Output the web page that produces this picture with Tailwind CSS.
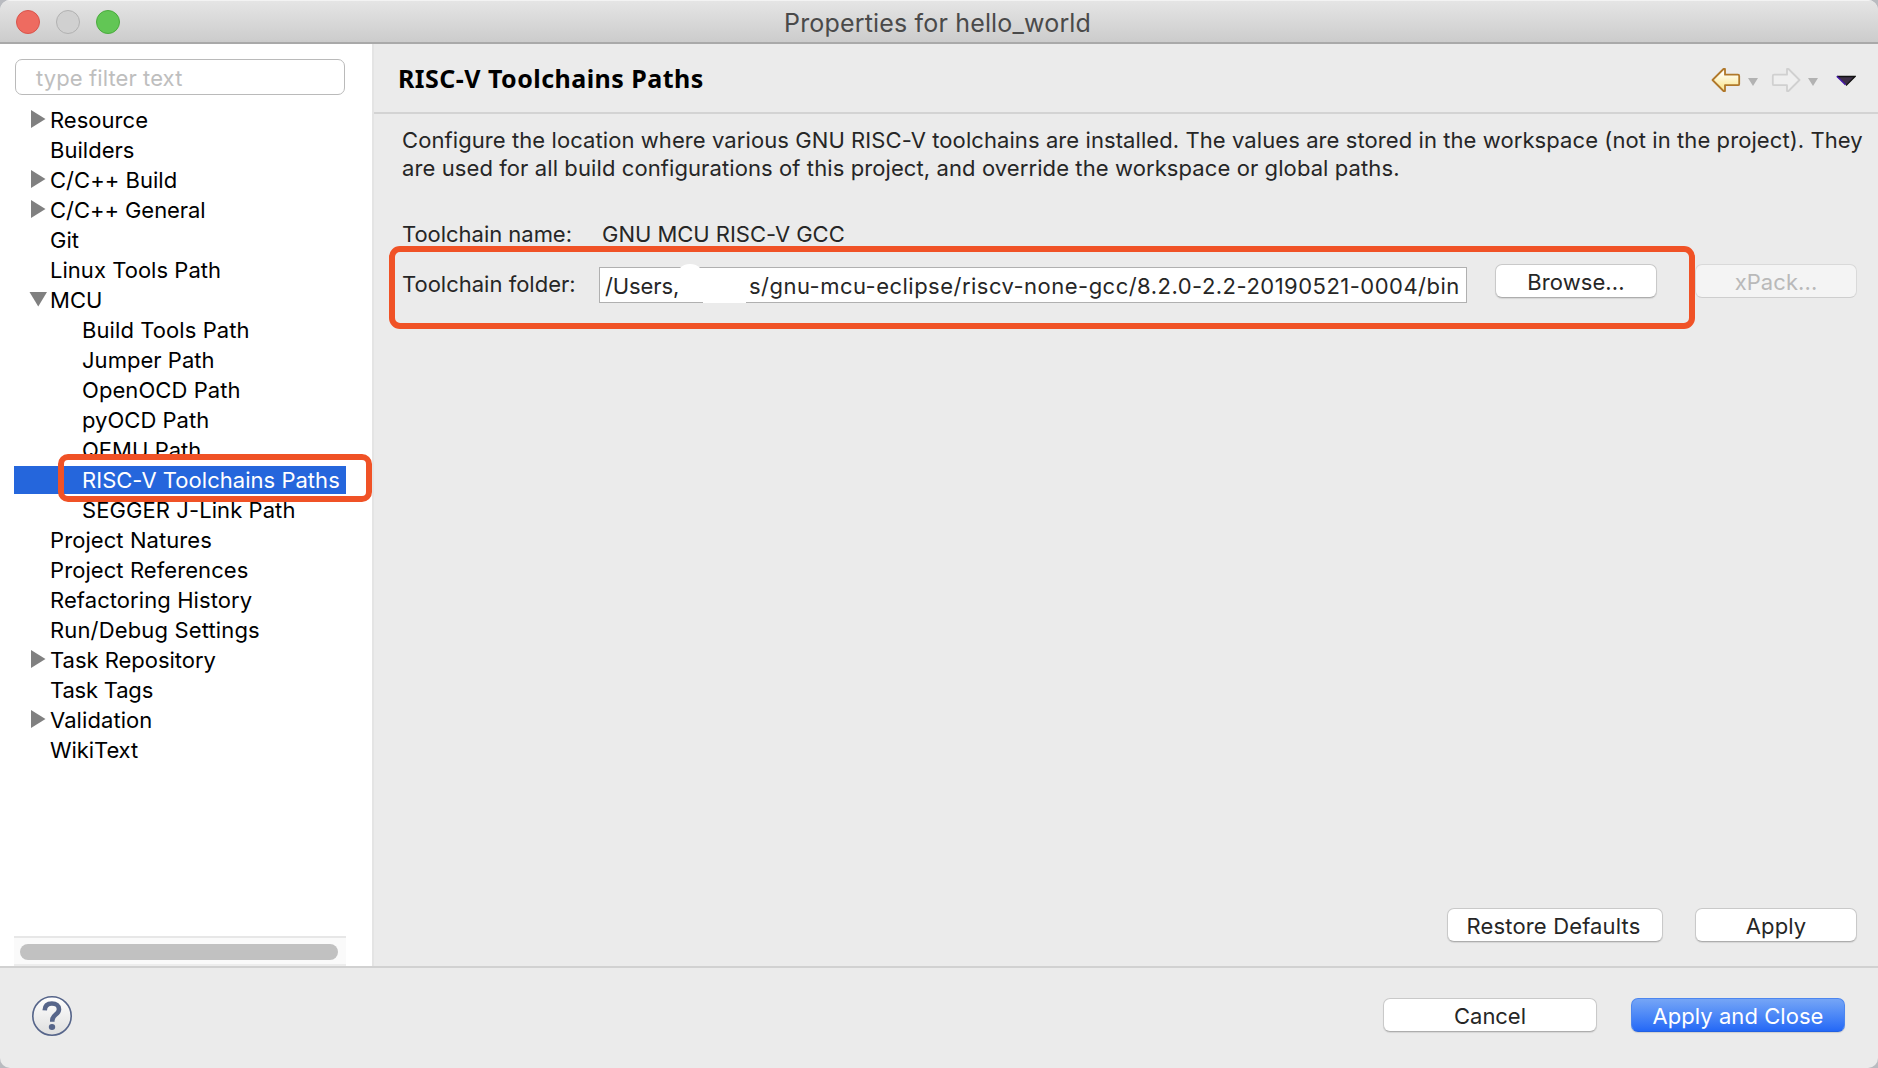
<!DOCTYPE html>
<html lang="en">
<head>
<meta charset="utf-8">
<title>Properties for hello_world</title>
<script src="https://cdn.jsdelivr.net/npm/@tailwindcss/browser@4"></script>
</head>
<body class="bg-[#b9bbc0]">
<div class="relative flex h-[1068px] w-[1878px] flex-col overflow-hidden rounded-[10px] bg-[#ebebeb] font-['Inter',sans-serif] text-[22px] leading-[30px] tracking-[0.08px] text-[#262626]">

  <!-- Title bar -->
  <header class="flex h-11 shrink-0 items-center border-t border-b-2 border-t-[#f3f3f3] border-b-[#a9a9a9] bg-linear-to-b from-[#e5e5e5] to-[#cccccc] pl-4">
    <div class="flex w-[300px] gap-4">
      <span class="size-6 rounded-full border border-[#d9544b] bg-[#ee6b60]"></span>
      <span class="size-6 rounded-full border border-[#b1b1b1] bg-[#d0d0d0]"></span>
      <span class="size-6 rounded-full border border-[#4aab3d] bg-[#62c655]"></span>
    </div>
    <h1 class="pt-[3px] pl-[468px] text-[25px] tracking-[0.17px] text-[#4a4a4a]">Properties for hello_world</h1>
  </header>

  <div class="flex min-h-0 flex-1">
    <!-- Navigation tree -->
    <aside class="flex w-[372px] shrink-0 flex-col bg-white pt-[15px] text-black">
      <div class="mr-[27px] ml-[15px] flex h-9 items-center rounded-[7px] border border-[#bababa] pt-0.5 pl-5 tracking-[0.1px] text-[#bebebe]">type filter text</div>
      <ul class="mt-2.5 mr-[26px] ml-3.5 tracking-[0.03px] whitespace-nowrap">
        <li class="flex h-[30px]"><svg class="h-[30px] w-9" viewBox="0 0 36 30"><path d="M17 5v18l14.500-9z" fill="#808080"/></svg>Resource</li>
        <li class="h-[30px] pl-9">Builders</li>
        <li class="flex h-[30px]"><svg class="h-[30px] w-9" viewBox="0 0 36 30"><path d="M17 5v18l14.500-9z" fill="#808080"/></svg>C/C++ Build</li>
        <li class="flex h-[30px] tracking-[-0.06px]"><svg class="h-[30px] w-9" viewBox="0 0 36 30"><path d="M17 5v18l14.500-9z" fill="#808080"/></svg>C/C++ General</li>
        <li class="h-[30px] pl-9">Git</li>
        <li class="h-[30px] pl-9">Linux Tools Path</li>
        <li class="flex h-[30px]"><svg class="h-[30px] w-9" viewBox="0 0 36 30"><path d="M15.500 7h17.500l-8.750 14.500z" fill="#808080"/></svg>MCU</li>
        <li class="h-[30px] pl-[68px] tracking-[0.08px]">Build Tools Path</li>
        <li class="h-[30px] pl-[68px]">Jumper Path</li>
        <li class="h-[30px] pl-[68px] tracking-[0.08px]">OpenOCD Path</li>
        <li class="h-[30px] pl-[68px]">pyOCD Path</li>
        <li class="h-[30px] pl-[68px]">QEMU Path</li>
        <li class="my-px h-7 bg-[#2566dc] pl-[68px] leading-7 text-white">RISC-V Toolchains Paths</li>
        <li class="h-[30px] pl-[68px] tracking-[0.08px]">SEGGER J-Link Path</li>
        <li class="h-[30px] pl-9 tracking-[0.08px]">Project Natures</li>
        <li class="h-[30px] pl-9 tracking-[0.08px]">Project References</li>
        <li class="h-[30px] pl-9 tracking-[0.08px]">Refactoring History</li>
        <li class="h-[30px] pl-9 tracking-[0.15px]">Run/Debug Settings</li>
        <li class="flex h-[30px] tracking-[-0.02px]"><svg class="h-[30px] w-9" viewBox="0 0 36 30"><path d="M17 5v18l14.500-9z" fill="#808080"/></svg>Task Repository</li>
        <li class="h-[30px] pl-9 tracking-[-0.2px]">Task Tags</li>
        <li class="flex h-[30px] tracking-[0.08px]"><svg class="h-[30px] w-9" viewBox="0 0 36 30"><path d="M17 5v18l14.500-9z" fill="#808080"/></svg>Validation</li>
        <li class="h-[30px] pl-9 tracking-[-0.1px]">WikiText</li>
      </ul>
      <div class="mt-auto mr-[26px] ml-3.5 h-[30px] border-y-2 border-t-[#e7e7e7] border-b-[#ededed] bg-[#fafafa] pt-1.5 pr-2 pl-1.5">
        <div class="h-4 rounded-full bg-[#c1c1c1]"></div>
      </div>
    </aside>

    <!-- Property page -->
    <main class="flex min-w-0 flex-1 flex-col border-l-2 border-[#e4e4e4]">
      <div class="flex h-[70px] shrink-0 items-center border-b-2 border-[#d3d3d3] pl-6">
        <h2 class="font-['Noto_Sans',sans-serif] text-[25px] font-bold tracking-[0.46px] text-black">RISC-V Toolchains Paths</h2>
        <div class="mt-1 mr-[22px] ml-auto flex items-center">
          <svg class="h-[26px] w-[30px]" viewBox="0 0 30 26" fill="none"><defs><linearGradient id="gold" x1="0" y1="0" x2="0" y2="1"><stop offset=".2" stop-color="#fffdf3"/><stop offset=".8" stop-color="#fbe99c"/></linearGradient></defs><path d="M1.500 13 12.500 2H14v5.700h13q1.200 0 1.200 1.200v8q0 1.300-1.200 1.300H14V24h-1.500z" fill="url(#gold)" stroke="#b0782a" stroke-width="1.800" stroke-linejoin="round"/></svg>
          <svg class="ml-[7px] h-[26px] w-2.5" viewBox="0 0 10 26"><path d="M0 11h10l-5 8z" fill="#b2b2b2"/></svg>
          <svg class="ml-[13px] h-[26px] w-[30px]" viewBox="0 0 30 26"><path d="M28.500 13 17.500 2H16v5.700H3q-1.200 0-1.200 1.200v8q0 1.300 1.200 1.300h13V24h1.500z" fill="#efefef" stroke="#d0d0d0" stroke-width="1.800" stroke-linejoin="round"/></svg>
          <svg class="ml-[7px] h-[26px] w-2.5" viewBox="0 0 10 26"><path d="M0 11h10l-5 8z" fill="#b2b2b2"/></svg>
          <svg class="ml-[18px] h-[26px] w-5" viewBox="0 0 20 26"><path d="M1 9.500h18L10 18z" fill="#3d2f47"/><path d="M1 9.500h18L10 18.500" fill="none" stroke="#111" stroke-width="1.300"/><path d="M.8 9.300 9.500 17.800" stroke="#4313a8" stroke-width="1.500"/></svg>
        </div>
      </div>

      <p class="mt-3 ml-7 leading-7 whitespace-nowrap">Configure the location where various GNU RISC-V toolchains are installed. The values are stored in the workspace (not in the project). They<br><span class="tracking-[0.095px]">are used for all build configurations of this project, and override the workspace or global paths.</span></p>

      <div class="mt-[37px] ml-7 flex h-[30px] tracking-[-0.03px]">
        <span class="w-[200px]">Toolchain name:</span>
        <span>GNU MCU RISC-V GCC</span>
      </div>

      <div class="mt-[13px] ml-7 flex h-[41px] items-start">
        <span class="mt-[7px] w-[197px] tracking-normal">Toolchain folder:</span>
        <div class="relative mt-[5px] h-9 w-[868px] border border-[#b0b0b0] bg-white">
          <div class="absolute -top-1 left-[75px] h-8 w-[30px] rounded-full bg-white"></div>
          <div class="absolute -bottom-px left-[103px] h-6 w-[43px] bg-white"></div>
          <div class="relative flex pt-[3px] pl-[5px] tracking-[-0.1px]">
            <span class="w-[144px]">/Users,</span>
            <span class="tracking-[0.48px] whitespace-nowrap">s/gnu-mcu-eclipse/riscv-none-gcc/8.2.0-2.2-20190521-0004/bin</span>
          </div>
        </div>
        <button class="mt-0.5 ml-7 h-[34px] w-[162px] rounded-[7px] border border-[#c9c9c9] border-b-[#adadad] bg-white pt-px shadow-[0_1px_1px_#00000018]">Browse...</button>
        <button class="mt-0.5 ml-[38px] h-[34px] w-[162px] rounded-[7px] border border-[#d9d9d9] border-b-[#cecece] bg-[#f4f4f4] pt-px text-[#b9b9b9]">xPack...</button>
      </div>

      <div class="mt-auto mb-6 flex justify-end gap-8 pr-[21px]">
        <button class="h-[34px] w-[216px] rounded-[7px] border border-[#c9c9c9] border-b-[#adadad] bg-white pt-px pr-[3px] tracking-[0.15px] shadow-[0_1px_1px_#00000018]">Restore Defaults</button>
        <button class="h-[34px] w-[162px] rounded-[7px] border border-[#c9c9c9] border-b-[#adadad] bg-white pt-px shadow-[0_1px_1px_#00000018]">Apply</button>
      </div>
    </main>
  </div>

  <!-- Dialog buttons -->
  <footer class="flex h-[102px] shrink-0 items-start border-t-2 border-[#d1d1d1] pt-[30px] pr-[33px] pl-8">
    <svg class="-mt-0.5 size-10" viewBox="0 0 40 40" fill="none"><defs><linearGradient id="disc" x1="0" y1="0" x2="0" y2="1"><stop stop-color="#fff"/><stop offset="1" stop-color="#dedede"/></linearGradient></defs><circle cx="20" cy="20" r="19.200" fill="url(#disc)" stroke="#56658a" stroke-width="1.600"/><path d="M12.700 14.300C12.900 10 15.500 7.500 19.900 7.500c4.200 0 7.100 2.200 7.100 5.700 0 5.400-6.700 5.200-6.700 11v1.600" stroke="#56658a" stroke-width="4.600"/><ellipse cx="20" cy="31" rx="3.200" ry="2.900" fill="#56658a"/></svg>
    <button class="ml-auto h-[34px] w-[214px] rounded-[7px] border border-[#c9c9c9] border-b-[#adadad] bg-white pt-px tracking-[-0.05px] shadow-[0_1px_1px_#00000018]">Cancel</button>
    <button class="ml-[34px] h-[34px] w-[214px] rounded-[7px] border border-[#4c86ef] border-b-[#2160e2] bg-linear-to-b from-[#75a5f6] to-[#2468f6] pt-px tracking-[0.05px] text-white shadow-[0_1px_1px_#00000020]">Apply and Close</button>
  </footer>

  <!-- Highlight frames -->
  <div class="absolute top-[454px] left-[58px] h-12 w-[314px] rounded-[10px] border-6 border-[#f05226]"></div>
  <div class="absolute top-[246px] left-[389px] h-[83px] w-[1306px] rounded-[11px] border-6 border-[#f05226]"></div>
</div>
</body>
</html>
